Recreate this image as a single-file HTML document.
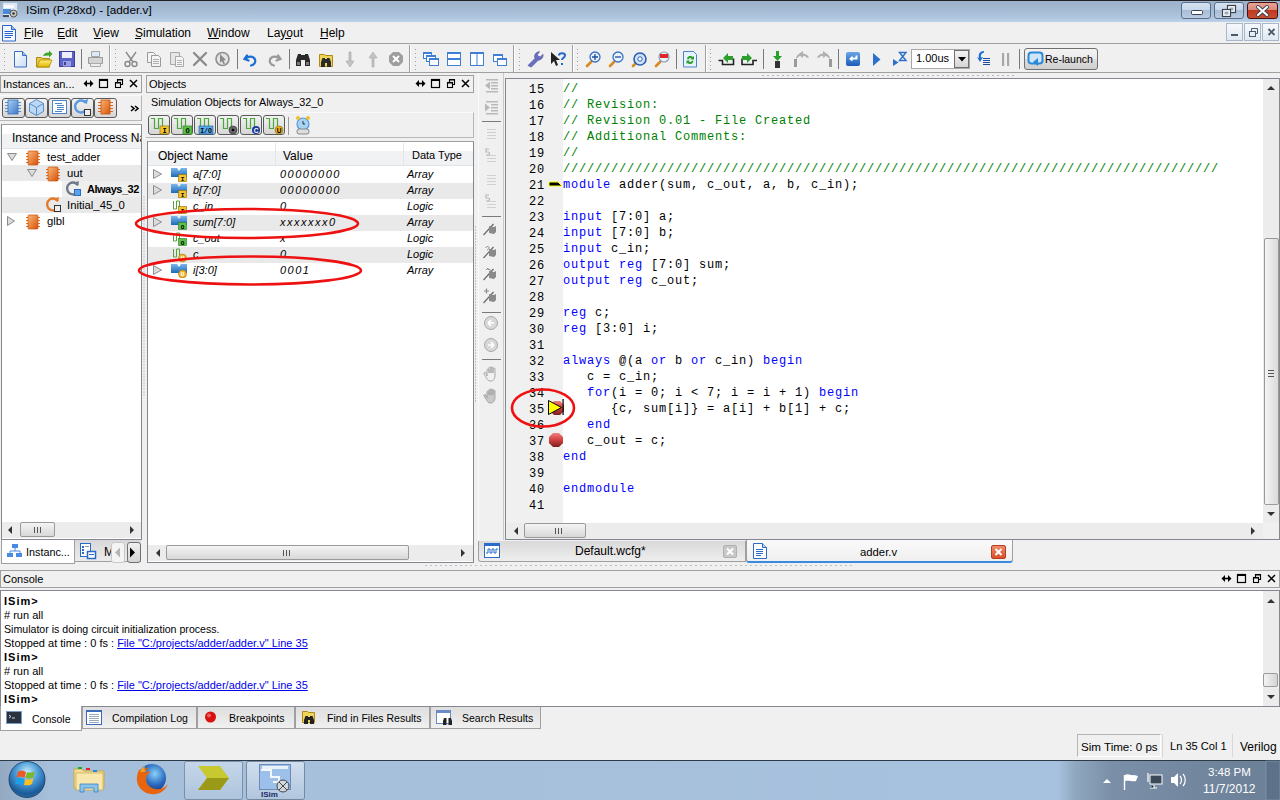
<!DOCTYPE html>
<html><head><meta charset="utf-8">
<style>
*{box-sizing:border-box;margin:0;padding:0}
html,body{width:1280px;height:800px;overflow:hidden;background:#f0f0f0;font-family:"Liberation Sans",sans-serif;font-size:11px;color:#000}
.a{position:absolute}
.t{position:absolute;white-space:pre;line-height:1}
#title{left:0;top:0;width:1280px;height:22px;background:linear-gradient(#9db1ca 0,#a2b7d0 35%,#b0c6e0 80%,#bcd2ea 100%);border-top:1px solid #222}
.wb{position:absolute;top:2px;height:17px;border:1px solid #5c6f8a;border-radius:3px;background:linear-gradient(#d5e2f1 0,#c8d7ea 45%,#a9bdd6 50%,#b8cbe2 100%)}
.menu{font-size:12px}
.tb-sep{position:absolute;width:1px;background:#a0a0a0}
.grip{position:absolute;width:2px;background:repeating-linear-gradient(#a8a8a8 0 1px,transparent 1px 4px)}
.ph{position:absolute;height:18px;border:1px solid #a0a0a0;background:#f0f0f0}
.ln{left:505px;width:40px;text-align:right;height:16px;line-height:16px}
.cl{left:563px;height:16px;line-height:16px}
.k{color:#0000ff}.c{color:#008000}
.btn{position:absolute;top:98px;width:23px;height:20px;border:1.5px solid #5a5a5a;border-radius:3px;background:linear-gradient(#f2f2f2,#d6d6d6)}
.tr{font-size:11.3px}
.ob{font-size:11px;font-style:italic}
.ov{left:280px;font-size:11px;font-style:italic;letter-spacing:1.5px}
.cs{left:4px;font-size:11px}
.lnk{color:#0000ee;text-decoration:underline}
.bt{font-size:10.5px}
.ht{font-size:11px}
.mdi{position:absolute;top:23px;width:17px;height:18px;border:1px solid #a8b8c8;background:linear-gradient(#f6f9fc,#dfe8f2)}
.code{font-family:"Liberation Mono",monospace;font-size:12px;letter-spacing:.8px}
</style></head><body>

<!-- TITLE BAR -->
<div id="title" class="a"></div>
<svg class="a" style="left:2px;top:2px" width="17" height="17"><rect x=".5" y=".5" width="15" height="15" fill="#dde8f4" stroke="#9ab0c8" stroke-width=".6"/><rect x="1" y="7" width="8" height="5" fill="#4a8ad8"/><rect x="2" y="3" width="10" height="3" fill="#fff" fill-opacity=".8"/><circle cx="11.5" cy="11.5" r="3.5" fill="#c8c8c8" stroke="#505050"/><circle cx="11.5" cy="11.5" r="1.2" fill="#303030"/><rect x="1" y="13" width="6" height="2" fill="#404a60"/></svg>
<div class="t" style="left:26px;top:5px;font-size:11.8px;color:#000">ISim (P.28xd) - [adder.v]</div>
<div class="wb" style="left:1181px;width:30px"></div>
<div class="wb" style="left:1214px;width:30px"></div>
<div class="wb" style="left:1247px;width:31px;border-color:#4a1010;background:linear-gradient(#e8a597 0,#d88a78 45%,#c0391d 50%,#c94f32 100%)"></div>

<svg class="a" style="left:1181px;top:2px" width="99" height="18">
<rect x="10.5" y="8.5" width="11" height="4" rx="1" fill="#fff" stroke="#3a4250"/>
<rect x="46.5" y="3.5" width="8" height="7" fill="#fff" stroke="#3a4250" stroke-width="1.2"/><rect x="48.5" y="5.5" width="4" height="3" fill="#9ab"/><rect x="41.5" y="7.5" width="8" height="7" fill="#fff" stroke="#3a4250" stroke-width="1.2"/><rect x="43.5" y="9.5" width="4" height="3" fill="#9ab"/>
<path d="M77 5l9 8M86 5l-9 8" stroke="#3a4250" stroke-width="4" stroke-linecap="round"/><path d="M77 5l9 8M86 5l-9 8" stroke="#fff" stroke-width="2.2" stroke-linecap="round"/>
</svg>
<!-- MENU BAR -->
<div class="a" style="left:0;top:22px;width:1280px;height:22px;background:#f0f0f0;border-bottom:1px solid #a0a0a0"></div>
<div class="t menu" style="left:24px;top:27px">File</div>
<div class="t menu" style="left:57px;top:27px">Edit</div>
<div class="t menu" style="left:93px;top:27px">View</div>
<div class="t menu" style="left:135px;top:27px">Simulation</div>
<div class="t menu" style="left:207px;top:27px">Window</div>
<div class="t menu" style="left:267px;top:27px">Layout</div>
<div class="t menu" style="left:320px;top:27px">Help</div>

<div class="a" style="left:24px;top:38px;width:7px;height:1px;background:#000"></div>
<div class="a" style="left:58px;top:38px;width:7px;height:1px;background:#000"></div>
<div class="a" style="left:94px;top:38px;width:7px;height:1px;background:#000"></div>
<div class="a" style="left:135px;top:38px;width:6px;height:1px;background:#000"></div>
<div class="a" style="left:208px;top:38px;width:11px;height:1px;background:#000"></div>
<div class="a" style="left:285px;top:38px;width:6px;height:1px;background:#000"></div>
<div class="a" style="left:320px;top:38px;width:8px;height:1px;background:#000"></div>
<svg class="a" style="left:1px;top:25px" width="16" height="17"><path d="M1.5 .5h9l4 4v11.5h-13z" fill="#f4f8fe" stroke="#2a64c8"/><path d="M10.5 .5v4h4" fill="#9cc0ee" stroke="#2a64c8"/><g stroke="#2a64c8"><line x1="3.5" y1="6.5" x2="12" y2="6.5"/><line x1="3.5" y1="8.5" x2="12" y2="8.5"/><line x1="3.5" y1="10.5" x2="12" y2="10.5"/><line x1="3.5" y1="12.5" x2="10" y2="12.5"/></g></svg>
<!-- MDI buttons -->
<div class="mdi" style="left:1226px"></div><div class="mdi" style="left:1244px"></div><div class="mdi" style="left:1262px"></div>
<svg class="a" style="left:1226px;top:23px" width="54" height="18"><rect x="5" y="11" width="7" height="2" fill="#4a5a6a"/><rect x="23.5" y="8.5" width="6" height="5" fill="none" stroke="#4a5a6a"/><path d="M25.5 8.5v-3h6v5h-2" fill="none" stroke="#4a5a6a"/><path d="M42.5 6l6 6M48.5 6l-6 6" stroke="#4a5a6a" stroke-width="1.8"/></svg>
<!-- TOOLBAR -->
<div class="a" style="left:0;top:44px;width:1280px;height:29px;background:#f0f0f0;border-bottom:1px solid #a0a0a0"></div>

<!-- TOOLBAR ICONS -->
<svg class="a" style="left:0;top:44px" width="1280" height="34" viewBox="0 44 1280 34">
<defs>
<linearGradient id="gpage" x1="0" y1="0" x2="1" y2="1"><stop offset="0" stop-color="#fff"/><stop offset="1" stop-color="#c9dcf4"/></linearGradient>
<linearGradient id="gfold" x1="0" y1="0" x2="0" y2="1"><stop offset="0" stop-color="#fff27a"/><stop offset="1" stop-color="#e0b400"/></linearGradient>
<linearGradient id="gblue" x1="0" y1="0" x2="0" y2="1"><stop offset="0" stop-color="#6aa6e8"/><stop offset="1" stop-color="#1a5bb8"/></linearGradient>
</defs>
<!-- group breaks (double line) -->
<g stroke="#a0a0a0" stroke-width="1">
<line x1="109.5" y1="45" x2="109.5" y2="72"/><line x1="409.5" y1="45" x2="409.5" y2="72"/><line x1="513.5" y1="45" x2="513.5" y2="72"/><line x1="572.5" y1="45" x2="572.5" y2="72"/><line x1="705.5" y1="45" x2="705.5" y2="72"/>
</g>
<g stroke="#fff" stroke-width="1">
<line x1="110.5" y1="45" x2="110.5" y2="72"/><line x1="410.5" y1="45" x2="410.5" y2="72"/><line x1="514.5" y1="45" x2="514.5" y2="72"/><line x1="573.5" y1="45" x2="573.5" y2="72"/><line x1="706.5" y1="45" x2="706.5" y2="72"/>
</g>
<!-- grips -->
<g fill="#a8a8a8">
<rect x="4" y="49" width="1" height="19" fill="none"/>
</g>
<g id="grips" fill="#9a9a9a"></g>
<!-- separators -->
<g fill="#7a7a7a">
<rect x="81" y="49" width="1" height="20"/><rect x="237" y="49" width="1" height="20"/><rect x="289" y="49" width="1" height="20"/><rect x="676" y="49" width="1" height="20"/><rect x="763" y="49" width="1" height="20"/><rect x="838" y="49" width="1" height="20"/><rect x="1019" y="49" width="1" height="20"/>
</g>
<!-- new doc -->
<path d="M14.5 51.5h8l4 4v11.5h-12z" fill="url(#gpage)" stroke="#3a6fc4"/><path d="M22.5 51.5v4h4" fill="#9cc0ee" stroke="#3a6fc4"/>
<!-- open folder -->
<path d="M36.5 57.5h5l1 1h7v8.5h-13z" fill="#e7c84a" stroke="#b08a10"/><path d="M37 67l3-7h12l-3 7z" fill="url(#gfold)" stroke="#b08a10" stroke-width=".8"/>
<path d="M43 56c1-3 4-4 6-3.5v-2l3.5 3.5-3.5 3.5v-2c-2-.3-4 .2-6 .5z" fill="#3aa52a"/>
<!-- save -->
<rect x="59.5" y="51.5" width="15" height="15" fill="#5c62c8" stroke="#3b3f9a"/><rect x="62" y="52" width="10" height="6" fill="#eef"/><rect x="63" y="61" width="8" height="5.5" fill="#9ca0e0"/><rect x="64" y="62" width="2" height="3" fill="#3b3f9a"/>
<!-- print (gray) -->
<path d="M91.5 51.5h8v5h-8z" fill="#dfe8f4" stroke="#9aa"/><path d="M88.5 57.5h14v6h-14z" fill="#d4d4d4" stroke="#999"/><path d="M90.5 63.5h10v3h-10z" fill="#eee" stroke="#aaa"/>
<!-- grips drawn -->
<g fill="#a0a0a0">
<rect x="4" y="49" width="1" height="1"/><rect x="4" y="53" width="1" height="1"/><rect x="4" y="57" width="1" height="1"/><rect x="4" y="61" width="1" height="1"/><rect x="4" y="65" width="1" height="1"/><rect x="4" y="69" width="1" height="1"/>
<rect x="115" y="49" width="1" height="1"/><rect x="115" y="53" width="1" height="1"/><rect x="115" y="57" width="1" height="1"/><rect x="115" y="61" width="1" height="1"/><rect x="115" y="65" width="1" height="1"/><rect x="115" y="69" width="1" height="1"/>
<rect x="415" y="49" width="1" height="1"/><rect x="415" y="53" width="1" height="1"/><rect x="415" y="57" width="1" height="1"/><rect x="415" y="61" width="1" height="1"/><rect x="415" y="65" width="1" height="1"/><rect x="415" y="69" width="1" height="1"/>
<rect x="519" y="49" width="1" height="1"/><rect x="519" y="53" width="1" height="1"/><rect x="519" y="57" width="1" height="1"/><rect x="519" y="61" width="1" height="1"/><rect x="519" y="65" width="1" height="1"/><rect x="519" y="69" width="1" height="1"/>
<rect x="577" y="49" width="1" height="1"/><rect x="577" y="53" width="1" height="1"/><rect x="577" y="57" width="1" height="1"/><rect x="577" y="61" width="1" height="1"/><rect x="577" y="65" width="1" height="1"/><rect x="577" y="69" width="1" height="1"/>
<rect x="710" y="49" width="1" height="1"/><rect x="710" y="53" width="1" height="1"/><rect x="710" y="57" width="1" height="1"/><rect x="710" y="61" width="1" height="1"/><rect x="710" y="65" width="1" height="1"/><rect x="710" y="69" width="1" height="1"/>
</g>
<!-- scissors gray -->
<g stroke="#8a8a8a" fill="none" stroke-width="1.4"><line x1="126" y1="52" x2="133" y2="62"/><line x1="136" y1="52" x2="129" y2="62"/><circle cx="127.5" cy="64" r="2.5"/><circle cx="134.5" cy="64" r="2.5"/></g>
<!-- copy gray -->
<g fill="#f4f4f4" stroke="#9a9a9a"><path d="M147.5 52.5h6l2 2v8h-8z"/><path d="M151.5 55.5h7l2 2v9h-9z"/></g><g stroke="#b0b0b0"><line x1="153" y1="59.5" x2="159" y2="59.5"/><line x1="153" y1="61.5" x2="159" y2="61.5"/><line x1="153" y1="63.5" x2="159" y2="63.5"/></g>
<!-- paste gray -->
<g fill="#e6e6e6" stroke="#a8a8a8"><path d="M170.5 52.5h9v12h-9z"/><path d="M175.5 56.5h6l2 2v8h-8z" fill="#f6f6f6"/></g><g stroke="#b0b0b0"><line x1="177" y1="60.5" x2="182" y2="60.5"/><line x1="177" y1="62.5" x2="182" y2="62.5"/><line x1="177" y1="64.5" x2="182" y2="64.5"/></g>
<!-- delete X gray -->
<g stroke="#8c8c8c" stroke-width="2.4" stroke-linecap="round"><line x1="194" y1="53" x2="206" y2="65"/><line x1="206" y1="53" x2="194" y2="65"/></g>
<!-- circle arrow gray -->
<circle cx="222.5" cy="59" r="6.5" fill="#e4e4e4" stroke="#8f8f8f" stroke-width="1.6"/><path d="M220 54l6 6-2.5.5 1.5 3-1.5.7-1.5-3-2 1.5z" fill="#8a8a8a"/>
<!-- undo blue -->
<path d="M247 55.5l-2.5 3.5 4 1.5M245.5 59c2-3 8-3.5 9.5.5 1 3-1 5.5-4 6" fill="none" stroke="#1b6fd6" stroke-width="2.2" stroke-linecap="round"/>
<!-- redo gray -->
<path d="M278 55.5l2.5 3.5-4 1.5M279.5 59c-2-3-8-3.5-9.5.5-1 3 1 5.5 4 6" fill="none" stroke="#9a9a9a" stroke-width="2.2" stroke-linecap="round"/>
<!-- binoculars -->
<g fill="#2a2a2a"><path d="M296 66v-6l2-6h3v12z"/><path d="M310 66v-6l-2-6h-3v12z"/><rect x="300" y="55" width="6" height="5"/></g><g fill="#7a7a7a"><rect x="297" y="62" width="3" height="3"/><rect x="306" y="62" width="3" height="3"/></g>
<!-- find in files -->
<path d="M319.5 54.5h5l1 1h7v11h-13z" fill="#f0d35a" stroke="#b08a10"/><g fill="#2a2a2a"><path d="M321 67v-5l1.5-4h2.5v9z"/><path d="M331 67v-5l-1.5-4h-2.5v9z"/><rect x="324" y="59" width="4" height="4"/></g>
<!-- down arrow gray -->
<path d="M349 52h2v9h3l-4 6-4-6h3z" fill="#c4c4c4" stroke="#a4a4a4" stroke-width=".6"/>
<!-- up arrow gray -->
<path d="M372 67h2v-9h3l-4-6-4 6h3z" fill="#c4c4c4" stroke="#a4a4a4" stroke-width=".6"/>
<!-- stop gray -->
<path d="M393 52h6l4 4v6l-4 4h-6l-4-4v-6z" fill="#9e9e9e"/><g stroke="#fff" stroke-width="2"><line x1="393" y1="56" x2="399" y2="62"/><line x1="399" y1="56" x2="393" y2="62"/></g>
<!-- cascade -->
<g fill="#fff" stroke="#3f7fd6"><rect x="423.5" y="52.5" width="8" height="6"/><rect x="426.5" y="55.5" width="9" height="6"/><rect x="429.5" y="58.5" width="9" height="7"/></g><g fill="#3f7fd6"><rect x="423" y="52" width="9" height="2"/><rect x="426" y="55" width="10" height="2"/><rect x="429" y="58" width="10" height="2"/></g>
<!-- tile horizontal -->
<rect x="447.5" y="52.5" width="13" height="13" fill="#fff" stroke="#3f7fd6"/><rect x="447" y="52" width="14" height="2" fill="#3f7fd6"/><rect x="447" y="58" width="14" height="2" fill="#3f7fd6"/>
<!-- tile vertical -->
<rect x="470.5" y="52.5" width="13" height="13" fill="#fff" stroke="#3f7fd6"/><rect x="470" y="52" width="14" height="2" fill="#3f7fd6"/><rect x="476.5" y="53" width="1" height="13" fill="#3f7fd6"/>
<!-- arrange -->
<g fill="#fff" stroke="#3f7fd6"><rect x="493.5" y="54.5" width="9" height="7"/><rect x="497.5" y="58.5" width="9" height="7"/></g><rect x="493" y="54" width="10" height="2" fill="#3f7fd6"/><rect x="497" y="58" width="10" height="2" fill="#3f7fd6"/>
<!-- wrench -->
<path d="M528 65.5l7-7c-1-2.5 0-5.5 3-6.5l1.5-.3-2.2 2.8 1 2 2.2.4 2.4-2.6c.5 3-1.5 5.8-4.6 5.8l-7 7z" fill="#6b6fc0" stroke="#4a4ea0" stroke-width=".7"/>
<!-- help arrow -->
<path d="M551 52v12l3-3 2 5 2-1-2-5h4z" fill="#222"/><path d="M559 55.5c0-3 6-3 6 0 0 2-3 2.5-3 4.5" fill="none" stroke="#2467c8" stroke-width="2"/><rect x="561" y="63" width="2" height="2" fill="#2467c8"/>
<!-- zoom in -->
<g><line x1="587" y1="66" x2="591" y2="62" stroke="#d88a22" stroke-width="2.6" stroke-linecap="round"/><circle cx="595" cy="57" r="5" fill="#eaf3fd" stroke="#3a6fc4" stroke-width="1.3"/><path d="M592 57h6M595 54v6" stroke="#1a4ea0" stroke-width="1.3"/></g>
<g><line x1="610" y1="66" x2="614" y2="62" stroke="#d88a22" stroke-width="2.6" stroke-linecap="round"/><circle cx="618" cy="57" r="5" fill="#eaf3fd" stroke="#3a6fc4" stroke-width="1.3"/><path d="M615 57h6" stroke="#1a4ea0" stroke-width="1.3"/></g>
<g><line x1="633" y1="66" x2="636" y2="63" stroke="#d88a22" stroke-width="2.6" stroke-linecap="round"/><circle cx="640" cy="59" r="6" fill="#cfe2f8" stroke="#2a5fb4" stroke-width="1.6"/><circle cx="640" cy="59" r="2.2" fill="#fff" stroke="#2a5fb4"/></g>
<g><line x1="656" y1="66" x2="660" y2="62" stroke="#d88a22" stroke-width="2.6" stroke-linecap="round"/><circle cx="664" cy="57" r="5" fill="#eaf3fd" stroke="#8a9ab4" stroke-width="1.2"/><rect x="660" y="54" width="8" height="4" fill="#e0242a"/></g>
<!-- refresh doc -->
<path d="M683.5 51.5h10l3 3v12.5h-13z" fill="#e8f2fc" stroke="#4a84d0"/><path d="M687 59a3.5 3.5 0 0 1 6-2l1-1v3.5h-3.5l1-1a2 2 0 0 0-3 1zM693.5 61a3.5 3.5 0 0 1-6 2l-1 1v-3.5h3.5l-1 1a2 2 0 0 0 3-1z" fill="#2aa02a"/>
<!-- step back / fwd -->
<path d="M718.5 60.5h4v4h11v-6" fill="none" stroke="#222" stroke-width="1.6"/><path d="M723 58l5-5v3h5v4h-5v3z" fill="#2aa02a"/>
<path d="M757 60.5h-4v4h-11v-6" fill="none" stroke="#222" stroke-width="1.6"/><path d="M752 58l-5-5v3h-5v4h5v3z" fill="#2aa02a"/>
<!-- step into -->
<path d="M776 51h3v5h3l-4.5 5-4.5-5h3z" fill="#2aa02a"/><rect x="775" y="61" width="5" height="7" fill="#333"/>
<rect x="794" y="59" width="3" height="8" fill="#9a9a9a"/><path d="M796 59c0-4 3-6 7-5.5 3 .3 5 2 6 4l-2 .5c-1-1.5-2.5-2.3-4-2.3v2.3l-5-3.5 5-3.5v2.2" fill="#b0b0b0"/>
<rect x="829" y="59" width="3" height="8" fill="#9a9a9a"/><path d="M830 59c0-4-3-6-7-5.5-3 .3-5 2-6 4l2 .5c1-1.5 2.5-2.3 4-2.3v2.3l5-3.5-5-3.5v2.2" fill="#b0b0b0"/>
<!-- restart -->
<rect x="846" y="52" width="14" height="14" rx="2" fill="url(#gblue)"/><path d="M849 59l3.5-3.5v2h3v-2h2v4h-5v2z" fill="#fff"/>
<!-- run -->
<path d="M873 53l7.5 6.5-7.5 6.5z" fill="#2f6fc8"/>
<!-- run for -->
<path d="M893 59l5.5 3.5-5.5 3.5z" fill="#2f6fc8"/><path d="M899.5 52.5h6.5l-3.25 4 3.25 4h-6.5l3.25-4z" fill="none" stroke="#2f6fc8" stroke-width="1.4"/>
<!-- step over -->
<path d="M984 51c-4 0-6 3-5 7l-2-1 3 5 3-5-2 .6c-.5-2.5.5-4.5 3-5z" fill="#1b6fd6"/><g fill="#1b4ea0"><rect x="983" y="58" width="7" height="1"/><rect x="983" y="60" width="7" height="1"/><rect x="983" y="62" width="7" height="1"/><rect x="983" y="64" width="7" height="1"/></g>
<!-- pause gray -->
<rect x="1002" y="53" width="2.2" height="13" fill="#a8a8a8"/><rect x="1007" y="53" width="2.2" height="13" fill="#a8a8a8"/>
</svg>
<svg class="a" style="left:0;top:0" width="1280" height="80"><rect x="762" y="75" width="2" height="1" fill="#b8b8b8"/><rect x="767" y="75" width="2" height="1" fill="#b8b8b8"/><rect x="772" y="75" width="2" height="1" fill="#b8b8b8"/><rect x="777" y="75" width="2" height="1" fill="#b8b8b8"/><rect x="782" y="75" width="2" height="1" fill="#b8b8b8"/><rect x="787" y="75" width="2" height="1" fill="#b8b8b8"/><rect x="792" y="75" width="2" height="1" fill="#b8b8b8"/><rect x="797" y="75" width="2" height="1" fill="#b8b8b8"/><rect x="802" y="75" width="2" height="1" fill="#b8b8b8"/><rect x="807" y="75" width="2" height="1" fill="#b8b8b8"/><rect x="812" y="75" width="2" height="1" fill="#b8b8b8"/><rect x="817" y="75" width="2" height="1" fill="#b8b8b8"/><rect x="822" y="75" width="2" height="1" fill="#b8b8b8"/><rect x="827" y="75" width="2" height="1" fill="#b8b8b8"/><rect x="832" y="75" width="2" height="1" fill="#b8b8b8"/><rect x="837" y="75" width="2" height="1" fill="#b8b8b8"/><rect x="842" y="75" width="2" height="1" fill="#b8b8b8"/><rect x="847" y="75" width="2" height="1" fill="#b8b8b8"/><rect x="852" y="75" width="2" height="1" fill="#b8b8b8"/><rect x="857" y="75" width="2" height="1" fill="#b8b8b8"/><rect x="862" y="75" width="2" height="1" fill="#b8b8b8"/><rect x="867" y="75" width="2" height="1" fill="#b8b8b8"/><rect x="872" y="75" width="2" height="1" fill="#b8b8b8"/><rect x="877" y="75" width="2" height="1" fill="#b8b8b8"/><rect x="882" y="75" width="2" height="1" fill="#b8b8b8"/><rect x="887" y="75" width="2" height="1" fill="#b8b8b8"/><rect x="892" y="75" width="2" height="1" fill="#b8b8b8"/><rect x="897" y="75" width="2" height="1" fill="#b8b8b8"/><rect x="902" y="75" width="2" height="1" fill="#b8b8b8"/><rect x="907" y="75" width="2" height="1" fill="#b8b8b8"/><rect x="912" y="75" width="2" height="1" fill="#b8b8b8"/><rect x="917" y="75" width="2" height="1" fill="#b8b8b8"/><rect x="922" y="75" width="2" height="1" fill="#b8b8b8"/><rect x="927" y="75" width="2" height="1" fill="#b8b8b8"/><rect x="932" y="75" width="2" height="1" fill="#b8b8b8"/><rect x="937" y="75" width="2" height="1" fill="#b8b8b8"/><rect x="942" y="75" width="2" height="1" fill="#b8b8b8"/><rect x="947" y="75" width="2" height="1" fill="#b8b8b8"/><rect x="952" y="75" width="2" height="1" fill="#b8b8b8"/><rect x="957" y="75" width="2" height="1" fill="#b8b8b8"/><rect x="962" y="75" width="2" height="1" fill="#b8b8b8"/><rect x="967" y="75" width="2" height="1" fill="#b8b8b8"/><rect x="972" y="75" width="2" height="1" fill="#b8b8b8"/><rect x="977" y="75" width="2" height="1" fill="#b8b8b8"/><rect x="982" y="75" width="2" height="1" fill="#b8b8b8"/><rect x="987" y="75" width="2" height="1" fill="#b8b8b8"/><rect x="992" y="75" width="2" height="1" fill="#b8b8b8"/><rect x="997" y="75" width="2" height="1" fill="#b8b8b8"/><rect x="1002" y="75" width="2" height="1" fill="#b8b8b8"/><rect x="1007" y="75" width="2" height="1" fill="#b8b8b8"/><rect x="1012" y="75" width="2" height="1" fill="#b8b8b8"/></svg>
<!-- combo -->
<div class="a" style="left:911px;top:49px;width:59px;height:20px;border:1px solid #a8a8a8;background:#fff"></div>
<div class="t" style="left:916px;top:53px;font-size:11px">1.00us</div>
<div class="a" style="left:954px;top:50px;width:15px;height:18px;background:linear-gradient(#f2f2f2,#d6d6d6);border:1px solid #707070"></div>
<svg class="a" style="left:958px;top:57px" width="8" height="5"><path d="M0 0h8l-4 4.5z" fill="#000"/></svg>
<!-- relaunch -->
<div class="a" style="left:1024px;top:48px;width:74px;height:22px;border:1px solid #707070;border-radius:3px;background:linear-gradient(#f2f2f2 0,#ebebeb 50%,#dddddd 51%,#cfcfcf 100%)"></div>
<svg class="a" style="left:1027px;top:51px" width="18" height="17"><rect x="1.5" y="1.5" width="14" height="11" rx="3" fill="#cfe6fa" stroke="#2a8ad8" stroke-width="2"/><path d="M6 11l5-4v8z" fill="#2a8ad8"/></svg>
<div class="t" style="left:1045px;top:54px;font-size:10.5px">Re-launch</div>

<!-- LEFT PANEL -->
<div class="ph" style="left:0;top:75px;width:142px"></div>
<div class="t" style="left:3px;top:79px">Instances an...</div>
<svg class="a" style="left:80px;top:76px" width="62" height="16">
<path d="M6 7.5h5" stroke="#000" stroke-width="1.6"/><path d="M3.5 7.5l3.5-3.5v7zM13.5 7.5l-3.5-3.5v7z" fill="#000"/>
<rect x="19.5" y="3.5" width="8" height="8" fill="none" stroke="#000" stroke-width="1.2"/><rect x="19" y="3" width="9" height="2" fill="#000"/>
<rect x="35.5" y="6.5" width="5" height="5" fill="none" stroke="#000" stroke-width="1.1"/><path d="M37.5 6.5v-3h5v5h-2" fill="none" stroke="#000" stroke-width="1.1"/><rect x="35" y="6" width="6" height="1.5"/><rect x="37" y="3" width="6" height="1.5"/>
<path d="M50 4l7 7M57 4l-7 7" stroke="#000" stroke-width="1.5"/>
</svg>
<div class="a" style="left:0;top:95px;width:142px;height:26px;border-right:1px solid #b8b8b8;border-bottom:1px solid #b8b8b8;border-top:1px solid #fafafa"></div>
<div class="btn" style="left:2px"></div><div class="btn" style="left:25px"></div><div class="btn" style="left:48px"></div><div class="btn" style="left:71px"></div><div class="btn" style="left:94px"></div>
<svg class="a" style="left:0;top:95px" width="142" height="26" viewBox="0 95 142 26">
<defs>
<linearGradient id="gchipb" x1="0" y1="0" x2="1" y2="1"><stop offset="0" stop-color="#a9cdf4"/><stop offset="1" stop-color="#3f7cc8"/></linearGradient>
<linearGradient id="gchipo" x1="0" y1="0" x2="1" y2="1"><stop offset="0" stop-color="#f9b070"/><stop offset="1" stop-color="#d8560c"/></linearGradient>
</defs>
<!-- chip blue -->
<g stroke="#5a8fd0" stroke-width="1"><line x1="5" y1="102.5" x2="21" y2="102.5"/><line x1="5" y1="105.5" x2="21" y2="105.5"/><line x1="5" y1="108.5" x2="21" y2="108.5"/><line x1="5" y1="111.5" x2="21" y2="111.5"/></g>
<rect x="8" y="100" width="10" height="14" fill="url(#gchipb)" stroke="#3a70b8" stroke-width=".8"/>
<!-- cube -->
<path d="M36.5 99.5l7 4v8l-7 4-7-4v-8z" fill="#bcd8f4" stroke="#5a8ecc"/><path d="M29.5 103.5l7 4 7-4M36.5 107.5v8" fill="none" stroke="#5a8ecc"/>
<!-- doc lines -->
<rect x="52.5" y="100.5" width="14" height="13" fill="#fff" stroke="#4c84cc"/><g stroke="#4c84cc"><line x1="55" y1="103.5" x2="62" y2="103.5"/><line x1="57" y1="105.5" x2="64" y2="105.5"/><line x1="57" y1="107.5" x2="64" y2="107.5"/><line x1="57" y1="109.5" x2="64" y2="109.5"/><line x1="55" y1="111.5" x2="62" y2="111.5"/></g>
<!-- process -->
<path d="M86 103a6 6 0 1 0 -1 8" fill="none" stroke="#5a9ae0" stroke-width="2.5"/><path d="M82 101l6-2-1 5z" fill="#5a9ae0"/><rect x="84.5" y="109.5" width="6" height="6" fill="#eee" stroke="#333"/>
<!-- chip orange -->
<g stroke="#e06a1c" stroke-width="1"><line x1="98" y1="102.5" x2="113" y2="102.5"/><line x1="98" y1="105.5" x2="113" y2="105.5"/><line x1="98" y1="108.5" x2="113" y2="108.5"/><line x1="98" y1="111.5" x2="113" y2="111.5"/></g>
<rect x="101" y="100" width="9" height="14" fill="url(#gchipo)" stroke="#c8500c" stroke-width=".8"/>
<path d="M131 106l3 2.5-3 2.5M135 106l3 2.5-3 2.5" fill="none" stroke="#000" stroke-width="1.6"/>
</svg>
<!-- tree -->
<div class="a" style="left:1px;top:124px;width:141px;height:416px;background:#fff;border:1px solid #828790;border-top-color:#a0a0a0"></div>
<div class="a" style="left:2px;top:125px;width:139px;height:24px;background:linear-gradient(#fff 0,#fff 40%,#f1f2f4 41%,#f1f2f4 100%);border-bottom:1px solid #e2e3e5"></div>

<div class="a" style="left:2px;top:165px;width:139px;height:16px;background:#e9e9e9"></div>
<div class="a" style="left:2px;top:197px;width:139px;height:16px;background:#e9e9e9"></div>
<div class="a" style="left:62px;top:181px;width:79px;height:16px;background:#efefef"></div>
<svg class="a" style="left:0;top:148px" width="142" height="82" viewBox="0 148 142 82">
<defs>
<linearGradient id="gchipo2" x1="0" y1="0" x2="1" y2="1"><stop offset="0" stop-color="#fbb878"/><stop offset="1" stop-color="#d6520a"/></linearGradient>
</defs>
<path d="M7.5 153.5h9l-4.5 7z" fill="#dcdcdc" stroke="#8a8a8a"/>
<path d="M27.5 169.5h9l-4.5 7z" fill="#dcdcdc" stroke="#8a8a8a"/>
<path d="M7.5 216.5l7 4.5-7 4.5z" fill="#dcdcdc" stroke="#8a8a8a"/>
<g id="chip1"><g stroke="#e2701e"><line x1="26" y1="153.5" x2="40" y2="153.5"/><line x1="26" y1="156.5" x2="40" y2="156.5"/><line x1="26" y1="159.5" x2="40" y2="159.5"/><line x1="26" y1="162.5" x2="40" y2="162.5"/></g><rect x="28" y="151" width="10" height="14" rx="1" fill="url(#gchipo2)" stroke="#c4520c" stroke-width=".7"/></g>
<use href="#chip1" x="20" y="16"/>
<use href="#chip1" x="0" y="64"/>
<path d="M78 185a6 6 0 1 0 -1 8" fill="none" stroke="#6f7a86" stroke-width="2.4"/><path d="M73 183l6-2-1 5z" fill="#6f7a86"/><rect x="74.5" y="189.5" width="6" height="6" fill="#5aa2ea" stroke="#2a6ac0"/>
<path d="M58 201a6 6 0 1 0 -1 8" fill="none" stroke="#e27a2a" stroke-width="2.4"/><path d="M53 199l6-2-1 5z" fill="#e27a2a"/><rect x="54.5" y="205.5" width="6" height="6" fill="#eee" stroke="#333"/>
</svg>
<div class="a" style="left:2px;top:125px;width:139px;height:396px;overflow:hidden">
<div class="t" style="left:10px;top:7px;font-size:12px">Instance and Process Na</div>
<div class="t tr" style="left:45px;top:27px">test_adder</div>
<div class="t tr" style="left:65px;top:43px">uut</div>
<div class="t tr" style="left:85px;top:59px;font-weight:bold;font-size:11px;letter-spacing:-.5px">Always_32</div>
<div class="t tr" style="left:65px;top:75px">Initial_45_0</div>
<div class="t tr" style="left:45px;top:91px">glbl</div>
</div>
<!-- h scrollbar -->
<div class="a" style="left:2px;top:522px;width:139px;height:16px;background:#ececec"></div>
<div class="a" style="left:20px;top:522px;width:35px;height:15px;border:1px solid #9a9a9a;border-radius:2px;background:linear-gradient(#f4f4f4,#d8d8d8)"></div>
<svg class="a" style="left:0;top:522px" width="142" height="16"><path d="M8 8l4-4v8z" fill="#333"/><path d="M134 8l-4-4v8z" fill="#333"/><g stroke="#555"><line x1="34.5" y1="5" x2="34.5" y2="11"/><line x1="37.5" y1="5" x2="37.5" y2="11"/><line x1="40.5" y1="5" x2="40.5" y2="11"/></g></svg>
<!-- left tabs -->
<div class="a" style="left:74px;top:540px;width:67px;height:22px;background:linear-gradient(#d8d8d8,#ececec);border-bottom:1px solid #a0a0a0"></div>
<div class="a" style="left:1px;top:540px;width:74px;height:24px;background:#fff;border:1px solid #a0a0a0;border-top:none"></div>
<svg class="a" style="left:6px;top:543px" width="18" height="16"><g fill="#4a8ae0"><rect x="6" y="1" width="6" height="4"/><rect x="1" y="10" width="6" height="4"/><rect x="10" y="10" width="6" height="4"/></g><path d="M9 5v3M4 10V8h10v2" stroke="#4a8ae0" fill="none"/></svg>
<div class="t" style="left:26px;top:547px;font-size:10.8px">Instanc...</div>
<svg class="a" style="left:79px;top:542px" width="18" height="18"><rect x="1.5" y="1.5" width="10" height="13" fill="#fff" stroke="#2a6ac8"/><g fill="#2a6ac8"><rect x="3" y="4" width="2" height="2"/><rect x="3" y="7" width="2" height="2"/><rect x="3" y="10" width="2" height="2"/></g><rect x="6" y="4" width="4" height="1" fill="#999"/><rect x="8.5" y="9.5" width="8" height="7" fill="#fff" stroke="#2a6ac8" stroke-width="1.5"/><rect x="10" y="12" width="5" height="1" fill="#2a6ac8"/></svg>
<div class="t" style="left:104px;top:546px;font-size:12px">M</div>
<div class="a" style="left:111px;top:542px;width:14px;height:21px;border:1px solid #c8c8c8;border-radius:3px;background:#f4f4f4"></div>
<div class="a" style="left:127px;top:542px;width:14px;height:21px;border:1px solid #707070;border-radius:3px;background:linear-gradient(#f0f0f0,#d4d4d4)"></div>
<svg class="a" style="left:111px;top:542px" width="30" height="21"><path d="M4 10.5l5-5v10z" fill="#b4b4b4"/><path d="M24 10.5l-5-5v10z" fill="#000"/></svg>

<svg class="a" style="left:0;top:0" width="150" height="400"><rect x="143.5" y="196" width="1" height="2" fill="#c4c4c4"/><rect x="143.5" y="199" width="1" height="2" fill="#c4c4c4"/><rect x="143.5" y="202" width="1" height="2" fill="#c4c4c4"/><rect x="143.5" y="205" width="1" height="2" fill="#c4c4c4"/><rect x="143.5" y="208" width="1" height="2" fill="#c4c4c4"/><rect x="143.5" y="211" width="1" height="2" fill="#c4c4c4"/><rect x="143.5" y="214" width="1" height="2" fill="#c4c4c4"/><rect x="143.5" y="217" width="1" height="2" fill="#c4c4c4"/><rect x="143.5" y="220" width="1" height="2" fill="#c4c4c4"/><rect x="143.5" y="223" width="1" height="2" fill="#c4c4c4"/><rect x="143.5" y="226" width="1" height="2" fill="#c4c4c4"/><rect x="143.5" y="229" width="1" height="2" fill="#c4c4c4"/><rect x="143.5" y="232" width="1" height="2" fill="#c4c4c4"/><rect x="143.5" y="235" width="1" height="2" fill="#c4c4c4"/><rect x="143.5" y="238" width="1" height="2" fill="#c4c4c4"/><rect x="143.5" y="241" width="1" height="2" fill="#c4c4c4"/><rect x="143.5" y="244" width="1" height="2" fill="#c4c4c4"/><rect x="143.5" y="247" width="1" height="2" fill="#c4c4c4"/><rect x="143.5" y="250" width="1" height="2" fill="#c4c4c4"/><rect x="143.5" y="253" width="1" height="2" fill="#c4c4c4"/><rect x="143.5" y="256" width="1" height="2" fill="#c4c4c4"/><rect x="143.5" y="259" width="1" height="2" fill="#c4c4c4"/><rect x="143.5" y="262" width="1" height="2" fill="#c4c4c4"/><rect x="143.5" y="265" width="1" height="2" fill="#c4c4c4"/><rect x="143.5" y="268" width="1" height="2" fill="#c4c4c4"/><rect x="143.5" y="271" width="1" height="2" fill="#c4c4c4"/><rect x="143.5" y="274" width="1" height="2" fill="#c4c4c4"/><rect x="143.5" y="277" width="1" height="2" fill="#c4c4c4"/><rect x="143.5" y="280" width="1" height="2" fill="#c4c4c4"/><rect x="143.5" y="283" width="1" height="2" fill="#c4c4c4"/><rect x="143.5" y="286" width="1" height="2" fill="#c4c4c4"/><rect x="143.5" y="289" width="1" height="2" fill="#c4c4c4"/><rect x="143.5" y="292" width="1" height="2" fill="#c4c4c4"/><rect x="143.5" y="295" width="1" height="2" fill="#c4c4c4"/><rect x="143.5" y="298" width="1" height="2" fill="#c4c4c4"/><rect x="143.5" y="301" width="1" height="2" fill="#c4c4c4"/><rect x="143.5" y="304" width="1" height="2" fill="#c4c4c4"/><rect x="143.5" y="307" width="1" height="2" fill="#c4c4c4"/><rect x="143.5" y="310" width="1" height="2" fill="#c4c4c4"/><rect x="143.5" y="313" width="1" height="2" fill="#c4c4c4"/><rect x="143.5" y="316" width="1" height="2" fill="#c4c4c4"/><rect x="143.5" y="319" width="1" height="2" fill="#c4c4c4"/><rect x="143.5" y="322" width="1" height="2" fill="#c4c4c4"/><rect x="143.5" y="325" width="1" height="2" fill="#c4c4c4"/><rect x="143.5" y="328" width="1" height="2" fill="#c4c4c4"/><rect x="143.5" y="331" width="1" height="2" fill="#c4c4c4"/><rect x="143.5" y="334" width="1" height="2" fill="#c4c4c4"/><rect x="143.5" y="337" width="1" height="2" fill="#c4c4c4"/><rect x="143.5" y="340" width="1" height="2" fill="#c4c4c4"/><rect x="143.5" y="343" width="1" height="2" fill="#c4c4c4"/><rect x="143.5" y="346" width="1" height="2" fill="#c4c4c4"/><rect x="143.5" y="349" width="1" height="2" fill="#c4c4c4"/><rect x="143.5" y="352" width="1" height="2" fill="#c4c4c4"/><rect x="143.5" y="355" width="1" height="2" fill="#c4c4c4"/><rect x="143.5" y="358" width="1" height="2" fill="#c4c4c4"/><rect x="143.5" y="361" width="1" height="2" fill="#c4c4c4"/><rect x="143.5" y="364" width="1" height="2" fill="#c4c4c4"/><rect x="143.5" y="367" width="1" height="2" fill="#c4c4c4"/><rect x="143.5" y="370" width="1" height="2" fill="#c4c4c4"/><rect x="143.5" y="373" width="1" height="2" fill="#c4c4c4"/><rect x="143.5" y="376" width="1" height="2" fill="#c4c4c4"/><rect x="143.5" y="379" width="1" height="2" fill="#c4c4c4"/><rect x="143.5" y="382" width="1" height="2" fill="#c4c4c4"/><rect x="143.5" y="385" width="1" height="2" fill="#c4c4c4"/><rect x="143.5" y="388" width="1" height="2" fill="#c4c4c4"/><rect x="143.5" y="391" width="1" height="2" fill="#c4c4c4"/><rect x="143.5" y="394" width="1" height="2" fill="#c4c4c4"/></svg>
<!-- OBJECTS PANEL -->
<div class="ph" style="left:146px;top:75px;width:328px"></div>
<div class="t ht" style="left:149px;top:79px">Objects</div>
<svg class="a" style="left:412px;top:76px" width="62" height="16">
<path d="M6 7.5h5" stroke="#000" stroke-width="1.6"/><path d="M3.5 7.5l3.5-3.5v7zM13.5 7.5l-3.5-3.5v7z" fill="#000"/>
<rect x="19.5" y="3.5" width="8" height="8" fill="none" stroke="#000" stroke-width="1.2"/><rect x="19" y="3" width="9" height="2" fill="#000"/>
<rect x="35.5" y="6.5" width="5" height="5" fill="none" stroke="#000" stroke-width="1.1"/><path d="M37.5 6.5v-3h5v5h-2" fill="none" stroke="#000" stroke-width="1.1"/><rect x="35" y="6" width="6" height="1.5"/><rect x="37" y="3" width="6" height="1.5"/>
<path d="M50 4l7 7M57 4l-7 7" stroke="#000" stroke-width="1.5"/>
</svg>
<div class="t" style="left:151px;top:97px;font-size:10.8px">Simulation Objects for Always_32_0</div>
<div class="a" style="left:146px;top:112px;width:328px;height:26px;border-right:1px solid #b8b8b8;border-bottom:1px solid #b8b8b8;border-top:1px solid #fafafa"></div>
<div class="btn" style="left:148px;top:115px;width:22px"></div><div class="btn" style="left:171px;top:115px;width:22px"></div><div class="btn" style="left:194px;top:115px;width:22px"></div><div class="btn" style="left:217px;top:115px;width:22px"></div><div class="btn" style="left:240px;top:115px;width:22px"></div><div class="btn" style="left:263px;top:115px;width:22px"></div>
<svg class="a" style="left:146px;top:112px" width="180" height="26" viewBox="146 112 180 26">
<path id="wv" d="M151 118.5h3.5v10h4v-10h4v8" fill="none" stroke="#4aa83a" stroke-width="1.2"/>
<use href="#wv" x="23"/><use href="#wv" x="46"/><use href="#wv" x="69"/><use href="#wv" x="92"/><use href="#wv" x="115"/>
<rect x="160" y="126" width="9" height="8" fill="#f4c430" stroke="#8a6a00" stroke-width=".6"/><text x="164.5" y="133" font-size="7" text-anchor="middle" font-family="Liberation Mono" font-weight="bold">I</text>
<rect x="183" y="126" width="9" height="8" fill="#5cc04a" stroke="#2a7a20" stroke-width=".6"/><text x="187.5" y="133" font-size="7" text-anchor="middle" font-family="Liberation Mono" font-weight="bold">O</text>
<rect x="199" y="126" width="14" height="8" fill="#5aaae8" stroke="#1a5a9a" stroke-width=".6"/><text x="206" y="133" font-size="6.5" text-anchor="middle" font-family="Liberation Mono" font-weight="bold" fill="#000">I/O</text>
<circle cx="233" cy="130" r="4" fill="#666" stroke="#333" stroke-width=".6"/><circle cx="233" cy="130" r="1.3" fill="#000"/>
<circle cx="256" cy="130" r="4" fill="#1a3a98"/><text x="256" y="132.5" font-size="6.5" text-anchor="middle" fill="#fff" font-weight="bold">C</text>
<circle cx="279" cy="130" r="4" fill="#e8b020" stroke="#8a6a00" stroke-width=".6"/><text x="279" y="132.5" font-size="6.5" text-anchor="middle" fill="#000" font-weight="bold">U</text>
<rect x="288" y="117" width="1" height="18" fill="#9a9a9a"/>
<circle cx="303" cy="124" r="6" fill="#a8d4f4" stroke="#5a9ad8" stroke-width="1.2"/><circle cx="298" cy="118" r="2" fill="#f0c030"/><circle cx="308" cy="118" r="2" fill="#f0c030"/><path d="M303 121v3h2" stroke="#333" fill="none"/><rect x="297" y="129" width="12" height="5" rx="2" fill="#ddd" stroke="#888"/>
</svg>
<!-- table -->
<div class="a" style="left:147px;top:141px;width:327px;height:422px;background:#fff;border:1px solid #828790;border-top-color:#a0a0a0;overflow:hidden">
  <div class="a" style="left:0;top:0;width:325px;height:24px;background:linear-gradient(#fff 0,#fff 40%,#f1f2f4 41%,#f1f2f4 100%);border-bottom:1px solid #e2e3e5"></div>
  <div class="a" style="left:127px;top:1px;width:1px;height:22px;background:#e4e5e7"></div>
  <div class="a" style="left:255px;top:1px;width:1px;height:22px;background:#e4e5e7"></div>
  <div class="a" style="left:0;top:41px;width:325px;height:16px;background:#e9e9e9"></div>
  <div class="a" style="left:0;top:73px;width:325px;height:16px;background:#e9e9e9"></div>
  <div class="a" style="left:0;top:105px;width:325px;height:16px;background:#e9e9e9"></div>
</div>
<div class="t tr" style="left:158px;top:150px;font-size:12px">Object Name</div>
<div class="t tr" style="left:283px;top:150px;font-size:12px">Value</div>
<div class="t tr" style="left:412px;top:150px;font-size:11px">Data Type</div>
<svg class="a" style="left:147px;top:166px" width="50" height="112" viewBox="147 166 50 112">
<defs>
<linearGradient id="gbus" x1="0" y1="0" x2="0" y2="1"><stop offset="0" stop-color="#7ab8ec"/><stop offset="1" stop-color="#1f68b8"/></linearGradient>
</defs>
<g fill="#dcdcdc" stroke="#8e8e8e"><path d="M153.5 169.5l8 4.5-8 4.5z"/><path d="M153.5 185.5l8 4.5-8 4.5z"/><path d="M153.5 217.5l8 4.5-8 4.5z"/><path d="M153.5 265.5l8 4.5-8 4.5z"/></g>
<g id="bus"><path d="M171 168h6l2 3 2-3h6v9h-16z" fill="url(#gbus)"/></g>
<use href="#bus" y="16"/><use href="#bus" y="48"/><use href="#bus" y="96"/>
<g fill="none" stroke="#5aa03a"><path d="M173.5 201v8h3v-8h3v6"/><path d="M173.5 233v8h3v-8h3v6"/><path d="M173.5 249v8h3v-8h3v6"/></g>
<g stroke-width=".6">
<rect x="178.5" y="174.5" width="8" height="7" fill="#f4c430" stroke="#8a6a00"/>
<rect x="178.5" y="190.5" width="8" height="7" fill="#f4c430" stroke="#8a6a00"/>
<rect x="178.5" y="206.5" width="8" height="7" fill="#f4c430" stroke="#8a6a00"/>
<rect x="178.5" y="222.5" width="8" height="7" fill="#5cc04a" stroke="#2a7a20"/>
<rect x="178.5" y="238.5" width="8" height="7" fill="#5cc04a" stroke="#2a7a20"/>
<circle cx="182.5" cy="258" r="4" fill="#f0b830" stroke="#9a7010"/>
<circle cx="182.5" cy="274" r="4" fill="#f0b830" stroke="#9a7010"/>
</g>
<g font-family="Liberation Mono" font-size="6" font-weight="bold" text-anchor="middle"><text x="182.5" y="180.5">I</text><text x="182.5" y="196.5">I</text><text x="182.5" y="212.5">I</text><text x="182.5" y="228.5">O</text><text x="182.5" y="244.5">O</text><text x="182.5" y="260" fill="#fff">U</text><text x="182.5" y="276" fill="#fff">U</text></g>
</svg>
<div class="t ob" style="left:193px;top:169px">a[7:0]</div><div class="t ov" style="top:169px">00000000</div><div class="t ob" style="left:407px;top:169px">Array</div>
<div class="t ob" style="left:193px;top:185px">b[7:0]</div><div class="t ov" style="top:185px">00000000</div><div class="t ob" style="left:407px;top:185px">Array</div>
<div class="t ob" style="left:193px;top:201px">c_in</div><div class="t ov" style="top:201px">0</div><div class="t ob" style="left:407px;top:201px">Logic</div>
<div class="t ob" style="left:193px;top:217px">sum[7:0]</div><div class="t ov" style="top:217px">xxxxxxx0</div><div class="t ob" style="left:407px;top:217px">Array</div>
<div class="t ob" style="left:193px;top:233px">c_out</div><div class="t ov" style="top:233px">x</div><div class="t ob" style="left:407px;top:233px">Logic</div>
<div class="t ob" style="left:193px;top:249px">c</div><div class="t ov" style="top:249px">0</div><div class="t ob" style="left:407px;top:249px">Logic</div>
<div class="t ob" style="left:193px;top:265px">i[3:0]</div><div class="t ov" style="top:265px">0001</div><div class="t ob" style="left:407px;top:265px">Array</div>
<!-- objects h scrollbar -->
<div class="a" style="left:148px;top:545px;width:325px;height:16px;background:#ececec"></div>
<div class="a" style="left:166px;top:545px;width:243px;height:15px;border:1px solid #9a9a9a;border-radius:2px;background:linear-gradient(#f4f4f4,#d8d8d8)"></div>
<svg class="a" style="left:148px;top:545px" width="325" height="16"><path d="M8 8l4-4v8z" fill="#333"/><path d="M317 8l-4-4v8z" fill="#333"/><g stroke="#555"><line x1="135.5" y1="5" x2="135.5" y2="11"/><line x1="138.5" y1="5" x2="138.5" y2="11"/><line x1="141.5" y1="5" x2="141.5" y2="11"/></g></svg>

<!-- EDITOR -->
<div class="a" style="left:505px;top:78px;width:775px;height:462px;background:#fff;border:1px solid #828790"></div>
<div class="a" style="left:506px;top:79px;width:57px;height:444px;background:#f0f0f0"></div>
<div class="t code ln" style="top:82px">15</div>
<div class="t code cl" style="top:81px"><span class="c">//</span></div>
<div class="t code ln" style="top:98px">16</div>
<div class="t code cl" style="top:97px"><span class="c">// Revision:</span></div>
<div class="t code ln" style="top:114px">17</div>
<div class="t code cl" style="top:113px"><span class="c">// Revision 0.01 - File Created</span></div>
<div class="t code ln" style="top:130px">18</div>
<div class="t code cl" style="top:129px"><span class="c">// Additional Comments:</span></div>
<div class="t code ln" style="top:146px">19</div>
<div class="t code cl" style="top:145px"><span class="c">//</span></div>
<div class="t code ln" style="top:162px">20</div>
<div class="t code cl" style="top:161px"><span class="c">//////////////////////////////////////////////////////////////////////////////////</span></div>
<div class="t code ln" style="top:178px">21</div>
<div class="t code cl" style="top:177px"><span class="k">module</span> adder(sum, c_out, a, b, c_in);</div>
<div class="t code ln" style="top:194px">22</div>
<div class="t code ln" style="top:210px">23</div>
<div class="t code cl" style="top:209px"><span class="k">input</span> [7:0] a;</div>
<div class="t code ln" style="top:226px">24</div>
<div class="t code cl" style="top:225px"><span class="k">input</span> [7:0] b;</div>
<div class="t code ln" style="top:242px">25</div>
<div class="t code cl" style="top:241px"><span class="k">input</span> c_in;</div>
<div class="t code ln" style="top:258px">26</div>
<div class="t code cl" style="top:257px"><span class="k">output reg</span> [7:0] sum;</div>
<div class="t code ln" style="top:274px">27</div>
<div class="t code cl" style="top:273px"><span class="k">output reg</span> c_out;</div>
<div class="t code ln" style="top:290px">28</div>
<div class="t code ln" style="top:306px">29</div>
<div class="t code cl" style="top:305px"><span class="k">reg</span> c;</div>
<div class="t code ln" style="top:322px">30</div>
<div class="t code cl" style="top:321px"><span class="k">reg</span> [3:0] i;</div>
<div class="t code ln" style="top:338px">31</div>
<div class="t code ln" style="top:354px">32</div>
<div class="t code cl" style="top:353px"><span class="k">always</span> @(a <span class="k">or</span> b <span class="k">or</span> c_in) <span class="k">begin</span></div>
<div class="t code ln" style="top:370px">33</div>
<div class="t code cl" style="top:369px">   c = c_in;</div>
<div class="t code ln" style="top:386px">34</div>
<div class="t code cl" style="top:385px">   <span class="k">for</span>(i = 0; i &lt; 7; i = i + 1) <span class="k">begin</span></div>
<div class="t code ln" style="top:402px">35</div>
<div class="t code cl" style="top:401px">      {c, sum[i]} = a[i] + b[1] + c;</div>
<div class="t code ln" style="top:418px">36</div>
<div class="t code cl" style="top:417px">   <span class="k">end</span></div>
<div class="t code ln" style="top:434px">37</div>
<div class="t code cl" style="top:433px">   c_out = c;</div>
<div class="t code ln" style="top:450px">38</div>
<div class="t code cl" style="top:449px"><span class="k">end</span></div>
<div class="t code ln" style="top:466px">39</div>
<div class="t code ln" style="top:482px">40</div>
<div class="t code cl" style="top:481px"><span class="k">endmodule</span></div>
<div class="t code ln" style="top:498px">41</div>

<svg class="a" style="left:0;top:0" width="500" height="420"><rect x="475" y="226" width="1" height="2" fill="#c4c4c4"/><rect x="475" y="229" width="1" height="2" fill="#c4c4c4"/><rect x="475" y="232" width="1" height="2" fill="#c4c4c4"/><rect x="475" y="235" width="1" height="2" fill="#c4c4c4"/><rect x="475" y="238" width="1" height="2" fill="#c4c4c4"/><rect x="475" y="241" width="1" height="2" fill="#c4c4c4"/><rect x="475" y="244" width="1" height="2" fill="#c4c4c4"/><rect x="475" y="247" width="1" height="2" fill="#c4c4c4"/><rect x="475" y="250" width="1" height="2" fill="#c4c4c4"/><rect x="475" y="253" width="1" height="2" fill="#c4c4c4"/><rect x="475" y="256" width="1" height="2" fill="#c4c4c4"/><rect x="475" y="259" width="1" height="2" fill="#c4c4c4"/><rect x="475" y="262" width="1" height="2" fill="#c4c4c4"/><rect x="475" y="265" width="1" height="2" fill="#c4c4c4"/><rect x="475" y="268" width="1" height="2" fill="#c4c4c4"/><rect x="475" y="271" width="1" height="2" fill="#c4c4c4"/><rect x="475" y="274" width="1" height="2" fill="#c4c4c4"/><rect x="475" y="277" width="1" height="2" fill="#c4c4c4"/><rect x="475" y="280" width="1" height="2" fill="#c4c4c4"/><rect x="475" y="283" width="1" height="2" fill="#c4c4c4"/><rect x="475" y="286" width="1" height="2" fill="#c4c4c4"/><rect x="475" y="289" width="1" height="2" fill="#c4c4c4"/><rect x="475" y="292" width="1" height="2" fill="#c4c4c4"/><rect x="475" y="295" width="1" height="2" fill="#c4c4c4"/><rect x="475" y="298" width="1" height="2" fill="#c4c4c4"/><rect x="475" y="301" width="1" height="2" fill="#c4c4c4"/><rect x="475" y="304" width="1" height="2" fill="#c4c4c4"/><rect x="475" y="307" width="1" height="2" fill="#c4c4c4"/><rect x="475" y="310" width="1" height="2" fill="#c4c4c4"/><rect x="475" y="313" width="1" height="2" fill="#c4c4c4"/><rect x="475" y="316" width="1" height="2" fill="#c4c4c4"/><rect x="475" y="319" width="1" height="2" fill="#c4c4c4"/><rect x="475" y="322" width="1" height="2" fill="#c4c4c4"/><rect x="475" y="325" width="1" height="2" fill="#c4c4c4"/><rect x="475" y="328" width="1" height="2" fill="#c4c4c4"/><rect x="475" y="331" width="1" height="2" fill="#c4c4c4"/><rect x="475" y="334" width="1" height="2" fill="#c4c4c4"/><rect x="475" y="337" width="1" height="2" fill="#c4c4c4"/><rect x="475" y="340" width="1" height="2" fill="#c4c4c4"/><rect x="475" y="343" width="1" height="2" fill="#c4c4c4"/><rect x="475" y="346" width="1" height="2" fill="#c4c4c4"/><rect x="475" y="349" width="1" height="2" fill="#c4c4c4"/><rect x="475" y="352" width="1" height="2" fill="#c4c4c4"/><rect x="475" y="355" width="1" height="2" fill="#c4c4c4"/><rect x="475" y="358" width="1" height="2" fill="#c4c4c4"/><rect x="475" y="361" width="1" height="2" fill="#c4c4c4"/><rect x="475" y="364" width="1" height="2" fill="#c4c4c4"/><rect x="475" y="367" width="1" height="2" fill="#c4c4c4"/><rect x="475" y="370" width="1" height="2" fill="#c4c4c4"/><rect x="475" y="373" width="1" height="2" fill="#c4c4c4"/><rect x="475" y="376" width="1" height="2" fill="#c4c4c4"/><rect x="475" y="379" width="1" height="2" fill="#c4c4c4"/><rect x="475" y="382" width="1" height="2" fill="#c4c4c4"/><rect x="475" y="385" width="1" height="2" fill="#c4c4c4"/><rect x="475" y="388" width="1" height="2" fill="#c4c4c4"/><rect x="475" y="391" width="1" height="2" fill="#c4c4c4"/><rect x="475" y="394" width="1" height="2" fill="#c4c4c4"/><rect x="475" y="397" width="1" height="2" fill="#c4c4c4"/><rect x="475" y="400" width="1" height="2" fill="#c4c4c4"/></svg>
<!-- side toolbar -->
<div class="a" style="left:478px;top:73px;width:26px;height:467px;background:#f0f0f0;border-left:1px solid #fafafa;border-right:1px solid #c8c8c8"></div>
<svg class="a" style="left:478px;top:78px" width="26" height="330" viewBox="478 78 26 330">
<g fill="#b8b8b8">
<rect x="486" y="79" width="12" height="1.5"/><rect x="491" y="82" width="7" height="1.5"/><rect x="491" y="85" width="7" height="1.5"/><rect x="491" y="88" width="7" height="1.5"/><rect x="486" y="91" width="12" height="1.5"/><path d="M485 85.5l5-4v8z"/>
<rect x="486" y="101" width="12" height="1.5"/><rect x="491" y="104" width="7" height="1.5"/><rect x="491" y="107" width="7" height="1.5"/><rect x="491" y="110" width="7" height="1.5"/><rect x="486" y="113" width="12" height="1.5"/><path d="M490 107.5l-5-4v8z"/>
</g>
<rect x="482" y="121" width="19" height="1" fill="#7a7a7a"/>
<g fill="#d0d0d0">
<rect x="487" y="129" width="9" height="1"/><rect x="487" y="132" width="9" height="1"/><rect x="487" y="135" width="9" height="1"/><rect x="487" y="138" width="9" height="1"/>
<rect x="487" y="155" width="9" height="1"/><rect x="487" y="158" width="9" height="1"/><rect x="487" y="161" width="9" height="1"/>
<rect x="487" y="175" width="9" height="1"/><rect x="487" y="178" width="9" height="1"/><rect x="487" y="181" width="9" height="1"/><rect x="487" y="184" width="9" height="1"/>
<rect x="487" y="201" width="9" height="1"/><rect x="487" y="204" width="9" height="1"/><rect x="487" y="207" width="9" height="1"/>
</g>
<g fill="none" stroke="#b8b8b8" stroke-width="1.2"><path d="M489 149h-3v3h2a1.5 1.5 0 0 1 0 3h-2"/><path d="M489 195h-3v3h2a1.5 1.5 0 0 1 0 3h-2"/></g>
<rect x="482" y="216" width="19" height="1" fill="#7a7a7a"/>
<path d="M483.5 235l10-11" stroke="#6a6a6a" stroke-width="1.2"/><path d="M489 226c2 0 3 1 5 1l2-1v6l-2 2c-2 0-3-1-5-1z" fill="#8a8a8a"/><path d="M483.5 258l10-11" stroke="#6a6a6a" stroke-width="1.2"/><path d="M489 249c2 0 3 1 5 1l2-1v6l-2 2c-2 0-3-1-5-1z" fill="#8a8a8a"/><path d="M483.5 280l10-11" stroke="#6a6a6a" stroke-width="1.2"/><path d="M489 271c2 0 3 1 5 1l2-1v6l-2 2c-2 0-3-1-5-1z" fill="#8a8a8a"/><path d="M483.5 303l10-11" stroke="#6a6a6a" stroke-width="1.2"/><path d="M489 294c2 0 3 1 5 1l2-1v6l-2 2c-2 0-3-1-5-1z" fill="#8a8a8a"/><path d="M486 248c0-2 3-2 3 0 0 1-1 1.5-2 2" fill="none" stroke="#8a8a8a" stroke-width="1"/><path d="M486 270l2-2v1.5h1c1.5 0 2 1 2 2" fill="none" stroke="#8a8a8a" stroke-width="1"/><path d="M484 291h5M486.5 288.5v5" stroke="#8a8a8a" stroke-width="1.2"/>
<rect x="482" y="312" width="19" height="1" fill="#7a7a7a"/>
<circle cx="491" cy="323" r="6.5" fill="#d8d8d8" stroke="#a8a8a8"/><path d="M488 323h6M488 323l3-3M488 323l3 3" stroke="#fff" stroke-width="1.6" fill="none"/>
<circle cx="491" cy="345" r="6.5" fill="#d8d8d8" stroke="#a8a8a8"/><path d="M494 345h-6M494 345l-3-3M494 345l-3 3" stroke="#fff" stroke-width="1.6" fill="none"/>
<rect x="482" y="359" width="19" height="1" fill="#7a7a7a"/>
<path d="M487 376v-6a1 1 0 0 1 2 0v3v-5a1 1 0 0 1 2 0v5v-5a1 1 0 0 1 2 0v5v-4a1 1 0 0 1 2 0v7c0 3-2 5-4 5h-1c-2 0-3-2-4-4l-2-3a1 1 0 0 1 2-1z" fill="#f0f0f0" stroke="#a8a8a8"/>
<path d="M487 398v-6a1 1 0 0 1 2 0v3v-5a1 1 0 0 1 2 0v5v-5a1 1 0 0 1 2 0v5v-4a1 1 0 0 1 2 0v7c0 3-2 5-4 5h-1c-2 0-3-2-4-4l-2-3a1 1 0 0 1 2-1z" fill="#c8c8c8" stroke="#a8a8a8"/>
</svg>
<!-- markers -->
<svg class="a" style="left:540px;top:176px" width="30" height="272" viewBox="540 176 30 272">
<defs><linearGradient id="gbp2" x1="0" y1="0" x2="0" y2="1"><stop offset="0" stop-color="#f08080"/><stop offset=".5" stop-color="#d04040"/><stop offset="1" stop-color="#7a2020"/></linearGradient><radialGradient id="gbp" cx=".4" cy=".3" r=".8"><stop offset="0" stop-color="#f7a0a0"/><stop offset=".6" stop-color="#d04040"/><stop offset="1" stop-color="#8a2a2a"/></radialGradient></defs>
<path d="M549 182h9l4 4h-13z" fill="#000" stroke="#ffff00" stroke-width="1"/>
<path d="M554 401h6l4 4v6l-4 4h-6l-4-4v-6z" fill="url(#gbp2)"/>
<path d="M548.5 400.5v14l13-7z" fill="#ffff00" stroke="#000" stroke-width="1"/>
<rect x="562.5" y="399" width="1.2" height="16" fill="#000"/>
<path d="M553 433h6l4 4v6l-4 4h-6l-4-4v-6z" fill="url(#gbp2)"/>
</svg>
<!-- v scrollbar -->
<div class="a" style="left:1263px;top:79px;width:16px;height:444px;background:#ececec"></div>
<div class="a" style="left:1264px;top:238px;width:15px;height:267px;border:1px solid #9a9a9a;border-radius:2px;background:linear-gradient(90deg,#f4f4f4,#dadada)"></div>
<svg class="a" style="left:1263px;top:79px" width="16" height="444"><path d="M4 11l4-4 4 4z" fill="#333"/><path d="M4 433l4 4 4-4z" fill="#333"/><g stroke="#555"><line x1="5" y1="291.5" x2="11" y2="291.5"/><line x1="5" y1="294.5" x2="11" y2="294.5"/><line x1="5" y1="297.5" x2="11" y2="297.5"/></g></svg>
<!-- h scrollbar -->
<div class="a" style="left:506px;top:523px;width:757px;height:16px;background:#ececec"></div>
<div class="a" style="left:1263px;top:523px;width:16px;height:16px;background:#f0f0f0"></div>
<div class="a" style="left:524px;top:523px;width:62px;height:15px;border:1px solid #9a9a9a;border-radius:2px;background:linear-gradient(#f4f4f4,#d8d8d8)"></div>
<svg class="a" style="left:506px;top:523px" width="757" height="16"><path d="M8 8l4-4v8z" fill="#333"/><path d="M749 8l-4-4v8z" fill="#333"/><g stroke="#555"><line x1="49.5" y1="5" x2="49.5" y2="11"/><line x1="52.5" y1="5" x2="52.5" y2="11"/><line x1="55.5" y1="5" x2="55.5" y2="11"/></g></svg>
<!-- editor tabs -->
<div class="a" style="left:478px;top:541px;width:268px;height:21px;border:1px solid #a0a0a0;border-top:none;border-radius:0 0 0 3px;background:linear-gradient(#d9d9d9,#eeeeee)"></div>
<svg class="a" style="left:484px;top:543px" width="17" height="16"><rect x=".5" y=".5" width="15" height="14" fill="#fff" stroke="#2a6ac8"/><rect x="0" y="0" width="16" height="3" fill="#2a6ac8"/><path d="M2 10h2v-4h2v4h2v-4h2v4h2v-4h2" fill="none" stroke="#2a6ac8"/></svg>
<div class="t" style="left:575px;top:545px;font-size:12px">Default.wcfg*</div>
<div class="a" style="left:723px;top:545px;width:14px;height:13px;border:1px solid #b0b0b0;border-radius:2px;background:#c8c8c8"></div>
<svg class="a" style="left:723px;top:545px" width="14" height="13"><path d="M4 3.5l6 6M10 3.5l-6 6" stroke="#fff" stroke-width="2"/></svg>
<div class="a" style="left:746px;top:540px;width:267px;height:23px;border:1px solid #a0a0a0;border-top:none;border-radius:0 0 3px 3px;background:linear-gradient(#fafafa,#efefef);border-bottom:2px solid #3a8ae0"></div>
<svg class="a" style="left:752px;top:543px" width="16" height="16"><path d="M1.5 .5h9l4 4v11h-13z" fill="#fff" stroke="#2a6ac8"/><path d="M10.5 .5v4h4" fill="#bcd4f4" stroke="#2a6ac8"/><g stroke="#2a6ac8"><line x1="4" y1="6.5" x2="11" y2="6.5"/><line x1="4" y1="8.5" x2="11" y2="8.5"/><line x1="4" y1="10.5" x2="11" y2="10.5"/><line x1="4" y1="12.5" x2="9" y2="12.5"/></g></svg>
<div class="t" style="left:860px;top:547px;font-size:11.3px">adder.v</div>
<div class="a" style="left:991px;top:545px;width:15px;height:14px;border:1px solid #b04020;border-radius:2px;background:linear-gradient(#f08a6a,#d8502a)"></div>
<svg class="a" style="left:991px;top:545px" width="15" height="14"><path d="M4.5 4l6 6M10.5 4l-6 6" stroke="#fff" stroke-width="2"/></svg>
<!-- red ellipses -->
<svg class="a" style="left:0;top:0" width="1280" height="800">
<ellipse cx="247" cy="223.5" rx="111" ry="14.5" fill="none" stroke="#ee1111" stroke-width="2.6"/>
<ellipse cx="250" cy="270.5" rx="111" ry="14" fill="none" stroke="#ee1111" stroke-width="2.6"/>
<ellipse cx="543" cy="408" rx="31" ry="18.5" fill="none" stroke="#ee1111" stroke-width="2.6"/>
</svg>

<svg class="a" style="left:0;top:560px" width="1280" height="10" viewBox="0 560 1280 10"><rect x="425" y="565" width="2" height="1" fill="#c0c0c0"/><rect x="430" y="565" width="2" height="1" fill="#c0c0c0"/><rect x="435" y="565" width="2" height="1" fill="#c0c0c0"/><rect x="440" y="565" width="2" height="1" fill="#c0c0c0"/><rect x="445" y="565" width="2" height="1" fill="#c0c0c0"/><rect x="450" y="565" width="2" height="1" fill="#c0c0c0"/><rect x="455" y="565" width="2" height="1" fill="#c0c0c0"/><rect x="460" y="565" width="2" height="1" fill="#c0c0c0"/><rect x="465" y="565" width="2" height="1" fill="#c0c0c0"/><rect x="470" y="565" width="2" height="1" fill="#c0c0c0"/><rect x="475" y="565" width="2" height="1" fill="#c0c0c0"/><rect x="480" y="565" width="2" height="1" fill="#c0c0c0"/><rect x="485" y="565" width="2" height="1" fill="#c0c0c0"/><rect x="490" y="565" width="2" height="1" fill="#c0c0c0"/><rect x="495" y="565" width="2" height="1" fill="#c0c0c0"/><rect x="500" y="565" width="2" height="1" fill="#c0c0c0"/><rect x="505" y="565" width="2" height="1" fill="#c0c0c0"/><rect x="510" y="565" width="2" height="1" fill="#c0c0c0"/><rect x="515" y="565" width="2" height="1" fill="#c0c0c0"/><rect x="520" y="565" width="2" height="1" fill="#c0c0c0"/><rect x="525" y="565" width="2" height="1" fill="#c0c0c0"/><rect x="530" y="565" width="2" height="1" fill="#c0c0c0"/><rect x="535" y="565" width="2" height="1" fill="#c0c0c0"/><rect x="540" y="565" width="2" height="1" fill="#c0c0c0"/><rect x="545" y="565" width="2" height="1" fill="#c0c0c0"/><rect x="550" y="565" width="2" height="1" fill="#c0c0c0"/><rect x="555" y="565" width="2" height="1" fill="#c0c0c0"/><rect x="560" y="565" width="2" height="1" fill="#c0c0c0"/><rect x="565" y="565" width="2" height="1" fill="#c0c0c0"/><rect x="570" y="565" width="2" height="1" fill="#c0c0c0"/><rect x="575" y="565" width="2" height="1" fill="#c0c0c0"/><rect x="580" y="565" width="2" height="1" fill="#c0c0c0"/><rect x="585" y="565" width="2" height="1" fill="#c0c0c0"/><rect x="590" y="565" width="2" height="1" fill="#c0c0c0"/><rect x="595" y="565" width="2" height="1" fill="#c0c0c0"/><rect x="600" y="565" width="2" height="1" fill="#c0c0c0"/><rect x="605" y="565" width="2" height="1" fill="#c0c0c0"/><rect x="610" y="565" width="2" height="1" fill="#c0c0c0"/><rect x="615" y="565" width="2" height="1" fill="#c0c0c0"/><rect x="620" y="565" width="2" height="1" fill="#c0c0c0"/><rect x="625" y="565" width="2" height="1" fill="#c0c0c0"/><rect x="630" y="565" width="2" height="1" fill="#c0c0c0"/><rect x="635" y="565" width="2" height="1" fill="#c0c0c0"/><rect x="640" y="565" width="2" height="1" fill="#c0c0c0"/><rect x="645" y="565" width="2" height="1" fill="#c0c0c0"/><rect x="650" y="565" width="2" height="1" fill="#c0c0c0"/><rect x="655" y="565" width="2" height="1" fill="#c0c0c0"/><rect x="660" y="565" width="2" height="1" fill="#c0c0c0"/><rect x="665" y="565" width="2" height="1" fill="#c0c0c0"/><rect x="670" y="565" width="2" height="1" fill="#c0c0c0"/><rect x="675" y="565" width="2" height="1" fill="#c0c0c0"/><rect x="680" y="565" width="2" height="1" fill="#c0c0c0"/><rect x="685" y="565" width="2" height="1" fill="#c0c0c0"/><rect x="690" y="565" width="2" height="1" fill="#c0c0c0"/><rect x="695" y="565" width="2" height="1" fill="#c0c0c0"/><rect x="700" y="565" width="2" height="1" fill="#c0c0c0"/><rect x="705" y="565" width="2" height="1" fill="#c0c0c0"/><rect x="710" y="565" width="2" height="1" fill="#c0c0c0"/><rect x="715" y="565" width="2" height="1" fill="#c0c0c0"/><rect x="720" y="565" width="2" height="1" fill="#c0c0c0"/><rect x="725" y="565" width="2" height="1" fill="#c0c0c0"/><rect x="730" y="565" width="2" height="1" fill="#c0c0c0"/><rect x="735" y="565" width="2" height="1" fill="#c0c0c0"/><rect x="740" y="565" width="2" height="1" fill="#c0c0c0"/><rect x="745" y="565" width="2" height="1" fill="#c0c0c0"/><rect x="750" y="565" width="2" height="1" fill="#c0c0c0"/><rect x="755" y="565" width="2" height="1" fill="#c0c0c0"/><rect x="760" y="565" width="2" height="1" fill="#c0c0c0"/><rect x="765" y="565" width="2" height="1" fill="#c0c0c0"/><rect x="770" y="565" width="2" height="1" fill="#c0c0c0"/><rect x="775" y="565" width="2" height="1" fill="#c0c0c0"/><rect x="780" y="565" width="2" height="1" fill="#c0c0c0"/><rect x="785" y="565" width="2" height="1" fill="#c0c0c0"/><rect x="790" y="565" width="2" height="1" fill="#c0c0c0"/><rect x="795" y="565" width="2" height="1" fill="#c0c0c0"/><rect x="800" y="565" width="2" height="1" fill="#c0c0c0"/><rect x="805" y="565" width="2" height="1" fill="#c0c0c0"/><rect x="810" y="565" width="2" height="1" fill="#c0c0c0"/><rect x="815" y="565" width="2" height="1" fill="#c0c0c0"/><rect x="820" y="565" width="2" height="1" fill="#c0c0c0"/><rect x="825" y="565" width="2" height="1" fill="#c0c0c0"/><rect x="830" y="565" width="2" height="1" fill="#c0c0c0"/><rect x="835" y="565" width="2" height="1" fill="#c0c0c0"/><rect x="840" y="565" width="2" height="1" fill="#c0c0c0"/><rect x="845" y="565" width="2" height="1" fill="#c0c0c0"/><rect x="850" y="565" width="2" height="1" fill="#c0c0c0"/></svg>
<!-- CONSOLE -->
<div class="ph" style="left:0;top:570px;width:1280px"></div>
<div class="t ht" style="left:3px;top:574px">Console</div>
<svg class="a" style="left:1218px;top:571px" width="62" height="16">
<path d="M6 7.5h5" stroke="#000" stroke-width="1.6"/><path d="M3.5 7.5l3.5-3.5v7zM13.5 7.5l-3.5-3.5v7z" fill="#000"/>
<rect x="19.5" y="3.5" width="8" height="8" fill="none" stroke="#000" stroke-width="1.2"/><rect x="19" y="3" width="9" height="2" fill="#000"/>
<rect x="35.5" y="6.5" width="5" height="5" fill="none" stroke="#000" stroke-width="1.1"/><path d="M37.5 6.5v-3h5v5h-2" fill="none" stroke="#000" stroke-width="1.1"/><rect x="35" y="6" width="6" height="1.5"/><rect x="37" y="3" width="6" height="1.5"/>
<path d="M50 4l7 7M57 4l-7 7" stroke="#000" stroke-width="1.5"/>
</svg>
<div class="a" style="left:0;top:590px;width:1280px;height:117px;background:#fff;border:1px solid #828790"></div>
<div class="t cs" style="top:596px;font-weight:bold;font-size:11px;letter-spacing:1px">ISim&gt;</div>
<div class="t cs" style="top:610px"># run all</div>
<div class="t cs" style="top:624px;font-size:10.6px">Simulator is doing circuit initialization process.</div>
<div class="t cs" style="top:638px">Stopped at time : 0 fs : <span class="lnk">File "C:/projects/adder/adder.v" Line 35</span></div>
<div class="t cs" style="top:652px;font-weight:bold;font-size:11px;letter-spacing:1px">ISim&gt;</div>
<div class="t cs" style="top:666px"># run all</div>
<div class="t cs" style="top:680px">Stopped at time : 0 fs : <span class="lnk">File "C:/projects/adder/adder.v" Line 35</span></div>
<div class="t cs" style="top:694px;font-weight:bold;font-size:11px;letter-spacing:1px">ISim&gt;</div>
<div class="a" style="left:1263px;top:591px;width:16px;height:115px;background:#ececec"></div>
<div class="a" style="left:1263px;top:673px;width:15px;height:14px;border:1px solid #9a9a9a;border-radius:2px;background:linear-gradient(90deg,#f4f4f4,#d4d4d4)"></div>
<svg class="a" style="left:1263px;top:591px" width="16" height="115"><path d="M4 12l4-4 4 4z" fill="#333"/><path d="M4 104l4 4 4-4z" fill="#333"/></svg>
<!-- bottom tabs -->
<div class="a" style="left:82px;top:707px;width:115px;height:22px;border:1px solid #a0a0a0;border-top:none;background:linear-gradient(#dedede,#f0f0f0)"></div>
<div class="a" style="left:197px;top:707px;width:98px;height:22px;border:1px solid #a0a0a0;border-top:none;background:linear-gradient(#dedede,#f0f0f0)"></div>
<div class="a" style="left:295px;top:707px;width:135px;height:22px;border:1px solid #a0a0a0;border-top:none;background:linear-gradient(#dedede,#f0f0f0)"></div>
<div class="a" style="left:430px;top:707px;width:111px;height:22px;border:1px solid #a0a0a0;border-top:none;background:linear-gradient(#dedede,#f0f0f0)"></div>
<div class="a" style="left:0;top:706px;width:82px;height:25px;border:1px solid #a0a0a0;border-top:none;background:#fff"></div>
<svg class="a" style="left:0;top:706px" width="545" height="25" viewBox="0 706 545 25">
<rect x="6.5" y="711.5" width="15" height="12" fill="#2a3240" stroke="#7a9ac8"/><path d="M9 715l2 1.5-2 1.5M12 718h3" stroke="#fff" stroke-width=".8" fill="none"/>
<rect x="86.5" y="710.5" width="15" height="14" fill="#fff" stroke="#3a6ab8"/><rect x="86" y="710" width="16" height="2" fill="#3a6ab8"/><g fill="#9aa8b8"><rect x="89" y="714" width="10" height="1"/><rect x="89" y="716" width="10" height="1"/><rect x="89" y="718" width="10" height="1"/><rect x="89" y="720" width="10" height="1"/><rect x="89" y="722" width="10" height="1"/></g>
<circle cx="210.5" cy="717" r="5.5" fill="#d81010"/><circle cx="209" cy="715.5" r="2" fill="#f06060"/>
<path d="M302.5 711.5h5l1 1h6v10h-12z" fill="#f0d35a" stroke="#b08a10"/><g fill="#222"><path d="M304 724v-4l1.5-4h2.5v8z"/><path d="M314 724v-4l-1.5-4h-2.5v8z"/><rect x="307" y="717" width="4" height="3"/></g>
<rect x="436.5" y="710.5" width="14" height="13" fill="#fff" stroke="#6a8ac8"/><rect x="436" y="710" width="15" height="3" fill="#6a8ac8"/><g fill="#222"><path d="M443 725v-4l1-3h2.5v7z"/><path d="M452 725v-4l-1-3h-2.5v7z"/></g>
</svg>
<div class="t bt" style="left:32px;top:714px">Console</div>
<div class="t bt" style="left:112px;top:713px">Compilation Log</div>
<div class="t bt" style="left:229px;top:713px">Breakpoints</div>
<div class="t bt" style="left:327px;top:713px">Find in Files Results</div>
<div class="t bt" style="left:462px;top:713px">Search Results</div>
<!-- status bar -->
<div class="a" style="left:1077px;top:734px;width:84px;height:23px;border:1px solid #b4b4b4;border-right-color:#fff;border-bottom-color:#fff"></div>
<div class="t" style="left:1081px;top:741px;font-size:11.6px">Sim Time: 0 ps</div>
<div class="a" style="left:1162px;top:734px;width:1px;height:23px;background:#d8d8d8"></div>
<div class="t" style="left:1170px;top:741px;font-size:11.1px">Ln 35 Col 1</div>
<div class="a" style="left:1232px;top:734px;width:1px;height:23px;background:#d8d8d8"></div>
<div class="t" style="left:1240px;top:741px;font-size:12px">Verilog</div>

<!-- TASKBAR -->
<div class="a" style="left:0;top:760px;width:1280px;height:40px;background:linear-gradient(90deg,#93a9c2 0,#a6bfdb 50px,#a7c2de 1058px,#90a7c0 1075px,#7b90a8 1110px,#6d8199 1250px);border-top:1px solid #2d3a48"></div>
<svg class="a" style="left:0;top:760px" width="1280" height="40" viewBox="0 760 1280 40">
<defs>
<radialGradient id="gorb" cx=".5" cy=".3" r=".7"><stop offset="0" stop-color="#c8ecfc"/><stop offset=".45" stop-color="#4a9ad8"/><stop offset=".85" stop-color="#1a5a98"/><stop offset="1" stop-color="#2a6aa0"/></radialGradient>
<radialGradient id="gff" cx=".6" cy=".35" r=".65"><stop offset="0" stop-color="#8ad0f8"/><stop offset=".6" stop-color="#2a6ac0"/><stop offset="1" stop-color="#1a3a80"/></radialGradient>
<linearGradient id="gbtn" x1="0" y1="0" x2="0" y2="1"><stop offset="0" stop-color="#dfe9f5"/><stop offset="1" stop-color="#b4c8de"/></linearGradient>
</defs>
<circle cx="27" cy="779.5" r="18" fill="url(#gorb)" stroke="#1a3a5a" stroke-width=".8"/>
<path d="M18 772c3-2 5-1 8 0l-1.5 6c-3-1-5-2-8 0z" fill="#f05a22"/><path d="M27 772c3 1 5 1 8-1l-1.5 6c-3 2-5 1-8 1z" fill="#7ab82a"/><path d="M16.5 779c3-2 5-1 8 0l-1.5 6c-3-1-5-2-8 0z" fill="#1aa0e8"/><path d="M25.5 779c3 1 5 1 8-1l-1.5 6c-3 2-5 1-8 1z" fill="#fac020"/>
<path d="M74 769h8l2 2h20v17H74z" fill="#f2dc98" stroke="#c8a848"/><rect x="76" y="773" width="27" height="17" fill="#f8e8b0" stroke="#c8a848" stroke-width=".7"/><rect x="78" y="767" width="4" height="2" fill="#22aa22"/><rect x="86" y="768" width="4" height="2" fill="#e02222"/><rect x="93" y="770" width="4" height="2" fill="#2288ee"/>
<path d="M80 792v-8h18v8h-4v-4h-10v4z" fill="#8ac4ea" stroke="#3a80c0" stroke-width=".8"/>
<circle cx="152" cy="778" r="14" fill="url(#gff)"/>
<path d="M139 770c-3 6-3 13 1 18 4 5 10 7 16 6 6-1 10-5 12-10-3 4-8 6-13 5-5-1-9-5-9-10 0-3 2-6 5-7-3-1-5 0-7 1 1-2 3-4 5-5-4 0-7 1-10 2z" fill="#e8650e"/>
<path d="M140 772c1-3 3-5 5-6-1 3 0 5 1 6-2 0-4 0-6 0z" fill="#f8a020"/>
<rect x="184.5" y="761.5" width="58" height="38" rx="2" fill="url(#gbtn)" fill-opacity=".55" stroke="#5a6f88" stroke-opacity=".6"/>
<path d="M198 766h22l9 12-9 12h-22l9-12z" fill="#c8c830"/><path d="M198 790l9-12h22l-9 12z" fill="#9a9a18"/>
<rect x="246.5" y="761.5" width="58" height="38" rx="2" fill="url(#gbtn)" fill-opacity=".75" stroke="#5a6f88" stroke-opacity=".7"/>
<rect x="259.5" y="764.5" width="31" height="25" fill="#9cc0ea" stroke="#6a8ab8"/><path d="M261 770h10v7h8v5h-6" stroke="#f4f8fc" fill="none" stroke-width="2"/><rect x="262" y="766" width="26" height="3" fill="#e8f0f8"/><circle cx="283" cy="786" r="6" fill="#ddd" fill-opacity=".8" stroke="#444"/><path d="M279 782l8 8M287 782l-8 8" stroke="#444"/>
<text x="261" y="797" font-family="Liberation Sans" font-weight="bold" font-size="8" fill="#1a2a6a">ISim</text>
<path d="M1103 783l4-4 4 4z" fill="#fff"/>
<path d="M1124.5 775v15" stroke="#fff" stroke-width="1.4"/><path d="M1125 775c3-2 6 1 9 0l4 1-2 5c-3 1-7-1-11 0z" fill="#fff"/>
<rect x="1150" y="775" width="12" height="9" fill="#3a4a5a" stroke="#fff"/><path d="M1148 773v9M1154 785v3h-4M1157 788h-4" stroke="#fff" stroke-width="1.2"/>
<path d="M1171 777h3l4-4v14l-4-4h-3z" fill="#fff"/><path d="M1180 776c2 2 2 6 0 8M1183 774c3 3 3 9 0 12" stroke="#fff" fill="none" stroke-width="1.2"/>
<rect x="1266" y="761" width="14" height="39" fill="#5d7188" stroke="#8aa0b8" stroke-width=".6"/>
</svg>
<div class="t" style="left:1208px;top:767px;font-size:11.5px;color:#fff">3:48 PM</div>
<div class="t" style="left:1203px;top:783px;font-size:12px;color:#fff">11/7/2012</div>

</body></html>
